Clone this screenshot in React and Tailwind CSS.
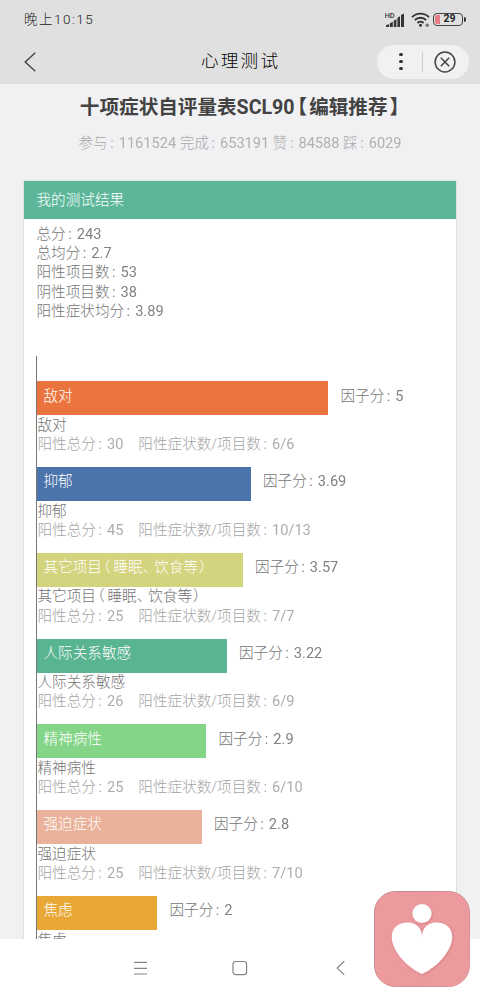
const summary = [
  { label: '总分', value: '243' },
  { label: '总均分', value: '2.7' },
  { label: '阳性项目数', value: '53' },
  { label: '阴性项目数', value: '38' },
  { label: '阳性症状均分', value: '3.89' },
];

const factors = [
  { name: '敌对', score: '5', total: '30', items: '6/6', width: 291, color: 'bg-[#eb733d]' },
  { name: '抑郁', score: '3.69', total: '45', items: '10/13', width: 213.5, color: 'bg-[#4b74ac]' },
  { name: '其它项目（睡眠、饮食等）', score: '3.57', total: '25', items: '7/7', width: 205.5, color: 'bg-[#d4d37e]' },
  { name: '人际关系敏感', score: '3.22', total: '26', items: '6/9', width: 189.5, color: 'bg-[#59b492]' },
  { name: '精神病性', score: '2.9', total: '25', items: '6/10', width: 169, color: 'bg-[#84d587]' },
  { name: '强迫症状', score: '2.8', total: '25', items: '7/10', width: 164.5, color: 'bg-[#eab29a]' },
  { name: '焦虑', score: '2', width: 120, color: 'bg-[#e9a836]' },
];

const punctuation = {
  '（': '-ml-[6px] mr-[3px]',
  '）': 'ml-[1px]',
  '、': '-mr-[3px]',
  '【': '-ml-[7px] mr-[2px]',
  '】': 'ml-[2px] -mr-[9px]',
};

/** Text with tightened full-width punctuation */
function Tight({ children }) {
  return children.split(/([（）、【】])/).map((part, index) =>
    punctuation[part] ? (
      <span key={index} className={punctuation[part]}>{part}</span>
    ) : (
      part
    )
  );
}

function Pair({ label, value }) {
  return (
    <span className="whitespace-pre">
      {label}
      <span className="ml-[2.5px] mr-[1.4px] font-normal opacity-90">: </span>
      <span className="font-normal opacity-90">{value}</span>
    </span>
  );
}

function StatusBar() {
  return (
    <div className="flex h-[39px] items-center justify-between pl-6 pr-[14px] text-[#222]">
      <span className="text-[13.5px] font-light tracking-[1.5px]">晚上10:15</span>
      <div className="flex items-center">
        <svg className="h-4 w-5" viewBox="0 0 20 16" fill="#333">
          <text x="-.5" y="6.2" fontSize="7.5" fontWeight="500" fontFamily="Roboto, sans-serif">HD</text>
          <path d="M1 13.2 4.2 12V15H1zM5 11.2 7.8 9.8V15H5zM8.800 8.500 11.400 7.200V15H8.800zM12.400 5.800 15 4.200V15h-2.600zM16 3 19 1.600V15H16z" />
        </svg>
        <svg className="ml-1.5 h-4 w-5" viewBox="0 0 20 16" fill="none" stroke="#333" strokeWidth="1.9">
          <path d="M1 5.200a12 12 0 0 1 17 0M3.800 8.200a8 8 0 0 1 11.400 0M6.500 11a4.300 4.300 0 0 1 6 0" />
          <circle cx="9.5" cy="13.3" r="1.500" fill="#333" stroke="none" />
          <path d="M14.300 13.200h3.800M16.200 11.600v3.400" strokeWidth="1.300" stroke="#666" />
        </svg>
        <div className="ml-[2px] flex items-center">
          <div className="relative flex h-[13px] w-[30px] items-center justify-center rounded-[4px] border border-[#444] text-[10.5px] font-bold leading-none">
            <span className="absolute left-px top-px h-[9px] w-[5px] rounded-l-[2px] bg-[#e97c87]" />
            <span className="ml-[3px]">29</span>
          </div>
          <div className="ml-px h-[5px] w-[2px] rounded-r bg-[#333]" />
        </div>
      </div>
    </div>
  );
}

function TitleBar() {
  return (
    <div className="flex h-[45px] items-center pl-6 pr-[11px]">
      <svg className="h-5 w-3" viewBox="0 0 12 20" fill="none" stroke="#444" strokeWidth="1.4">
        <path d="M11.3.7 1.2 10 11.3 19.3" />
      </svg>
      <h1 className="ml-[165px] w-[176px] text-[17.6px] font-light tracking-[2.2px] text-black">心理测试</h1>
      <div className="flex h-[34px] w-[92px] items-center rounded-full bg-[#f1f1f1]">
        <div className="flex w-[45px] flex-col items-center gap-[3.5px] pl-[3px]">
          <span className="size-[3.5px] rounded-full bg-[#333]" />
          <span className="size-[3.5px] rounded-full bg-[#333]" />
          <span className="size-[3.5px] rounded-full bg-[#333]" />
        </div>
        <div className="h-5 w-px bg-[#ccc]" />
        <svg className="ml-[11px] size-[22px]" viewBox="0 0 22 22" fill="none" stroke="#444" strokeWidth="1.5">
          <circle cx="11" cy="11" r="9.9" />
          <path d="m6.8 6.8 8.4 8.4M15.2 6.8l-8.4 8.4" />
        </svg>
      </div>
    </div>
  );
}

function FactorRow({ factor }) {
  return (
    <div className="h-[85.8px] whitespace-nowrap">
      <div className="flex">
        <div
          className={`h-[34px] shrink-0 pl-[6.5px] pt-[5.3px] text-white ${factor.color}`}
          style={{ width: `${factor.width}px` }}
        >
          <Tight>{factor.name}</Tight>
        </div>
        <div className="pl-[12.5px] pt-[5.3px]">
          <Pair label="因子分" value={factor.score} />
        </div>
      </div>
      <div className="pl-[0.5px] pt-[0.7px]"><Tight>{factor.name}</Tight></div>
      {factor.total && (
        <div className="flex gap-[15px] pl-[0.5px] text-[#a4a4a4]">
          <Pair label="阳性总分" value={factor.total} />
          <Pair label="阳性症状数/项目数" value={factor.items} />
        </div>
      )}
    </div>
  );
}

function NavBar() {
  return (
    <div className="flex h-[58px] items-center bg-white pl-[133px]">
      <svg className="h-4 w-[15px]" viewBox="0 0 15 16" stroke="#858585" strokeWidth="1.2">
        <path d="M1 2.4h13M1 8.4h13M1 14h13" />
      </svg>
      <svg className="ml-[84px] size-4" viewBox="0 0 16 16" fill="none" stroke="#858585" strokeWidth="1.2">
        <rect x="1" y="1.5" width="13.6" height="13.2" rx="2.6" />
      </svg>
      <svg className="ml-[88px] h-4 w-[9px]" viewBox="0 0 9 16" fill="none" stroke="#858585" strokeWidth="1.2">
        <path d="M8.3 1.2 1.2 8.1l7.1 6.8" />
      </svg>
    </div>
  );
}

function HeartBadge() {
  return (
    <svg className="absolute left-[374px] top-[891px] size-24" viewBox="0 0 96 96">
      <defs>
        <filter id="soft" x="-10%" y="-10%" width="120%" height="120%">
          <feDropShadow dx="0.7" dy="0.7" stdDeviation="0.8" floodColor="#a94f58" floodOpacity="0.45" />
        </filter>
        <linearGradient id="edge" x1="0" y1="0" x2="1" y2="1">
          <stop offset="0" stopColor="#c0868a" />
          <stop offset="1" stopColor="#e0959a" />
        </linearGradient>
      </defs>
      <rect x=".5" y=".5" width="95" height="95" rx="21" fill="#ec9a9e" stroke="url(#edge)" />
      <g fill="white" filter="url(#soft)">
        <circle cx="48" cy="22.5" r="9.6" />
        <path d="M48 46C48 37 42 31.500 34 31.500 24 31.500 17.800 37 17.800 46 17.800 59 32 76 48 83 64 76 78.200 59 78.200 46 78.200 37 72 31.500 62 31.500 54 31.500 48 37 48 46Z" />
      </g>
    </svg>
  );
}

export default function App() {
  return (
    <div className="relative flex h-[997px] w-[480px] flex-col overflow-hidden bg-[#f1f1f3] font-['Roboto','Noto_Sans_CJK_SC',sans-serif]">
      <header className="h-[84px] shrink-0 bg-[#e0e0e0]">
        <StatusBar />
        <TitleBar />
      </header>

      <main className="min-h-0 flex-1 overflow-hidden px-6 text-[14.6px] font-light leading-[19.2px] text-[#747474]">
        <h2 className="mt-[10px] whitespace-nowrap text-center text-[19.6px] font-bold leading-7 text-[#424242]">
          <Tight>十项症状自评量表SCL90【编辑推荐】</Tight>
        </h2>
        <div className="mt-[12px] flex justify-center gap-[3.6px] text-[#a9a9a9]">
          <Pair label="参与" value="1161524" />
          <Pair label="完成" value="653191" />
          <Pair label="赞" value="84588" />
          <Pair label="踩" value="6029" />
        </div>

        <section className="mt-[28px] bg-white shadow-[0_0_2px_rgba(0,0,0,0.2)]">
          <div className="h-[37.5px] bg-[#5cb79a] pl-[12.5px] pt-[9.5px] text-white">我的测试结果</div>
          <div className="flex flex-col pl-[12.5px] pt-[6.3px]">
            {summary.map((item) => (
              <Pair key={item.label} label={item.label} value={item.value} />
            ))}
          </div>
          <div className="ml-[12px] mt-[35.2px] border-l border-[#777] pt-[25px]">
            {factors.map((factor) => (
              <FactorRow key={factor.name} factor={factor} />
            ))}
          </div>
        </section>
      </main>

      <NavBar />
      <HeartBadge />
    </div>
  );
}
